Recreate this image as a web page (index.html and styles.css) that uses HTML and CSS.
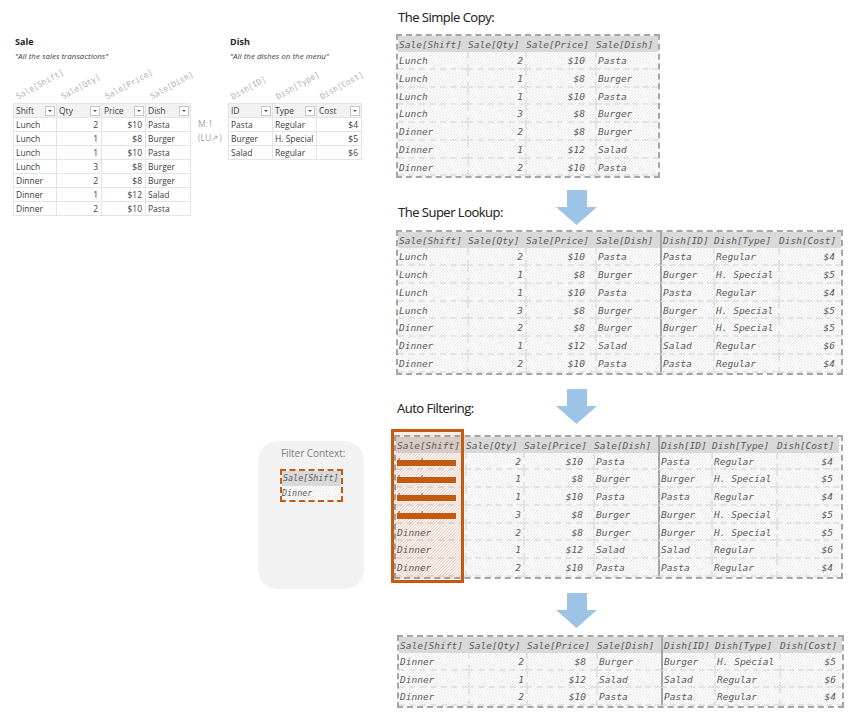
FILE: index.html
```html
<!DOCTYPE html>
<html lang="en">
<head>
<meta charset="utf-8">
<title>Filter context</title>
<link rel="stylesheet" href="styles.css">
</head>
<body>
<div class="page">
  <div class="left">
    <div class="sources">
      <section class="src src-sale">
        <h3>Sale</h3>
        <p class="desc">"All the sales transactions"</p>
        <div class="angled">
          <span>Sale[Shift]</span><span>Sale[Qty]</span><span>Sale[Price]</span><span>Sale[Dish]</span>
        </div>
        <div class="xl xl-sale">
          <div class="xh">Shift<i></i></div><div class="xh">Qty<i></i></div><div class="xh">Price<i></i></div><div class="xh">Dish<i></i></div>
          <div class="xc">Lunch</div><div class="xc n">2</div><div class="xc n">$10</div><div class="xc">Pasta</div>
          <div class="xc">Lunch</div><div class="xc n">1</div><div class="xc n">$8</div><div class="xc">Burger</div>
          <div class="xc">Lunch</div><div class="xc n">1</div><div class="xc n">$10</div><div class="xc">Pasta</div>
          <div class="xc">Lunch</div><div class="xc n">3</div><div class="xc n">$8</div><div class="xc">Burger</div>
          <div class="xc">Dinner</div><div class="xc n">2</div><div class="xc n">$8</div><div class="xc">Burger</div>
          <div class="xc">Dinner</div><div class="xc n">1</div><div class="xc n">$12</div><div class="xc">Salad</div>
          <div class="xc">Dinner</div><div class="xc n">2</div><div class="xc n">$10</div><div class="xc">Pasta</div>
        </div>
      </section>
      <div class="rel"><span>M:1</span><span>(LU↗)</span></div>
      <section class="src src-dish">
        <h3>Dish</h3>
        <p class="desc">"All the dishes on the menu"</p>
        <div class="angled">
          <span>Dish[ID]</span><span>Dish[Type]</span><span>Dish[Cost]</span>
        </div>
        <div class="xl xl-dish">
          <div class="xh">ID<i></i></div><div class="xh">Type<i></i></div><div class="xh">Cost<i></i></div>
          <div class="xc">Pasta</div><div class="xc">Regular</div><div class="xc n">$4</div>
          <div class="xc">Burger</div><div class="xc">H. Special</div><div class="xc n">$5</div>
          <div class="xc">Salad</div><div class="xc">Regular</div><div class="xc n">$6</div>
        </div>
      </section>
    </div>
    <aside class="filter">
      <p class="filter-title">Filter Context:</p>
      <div class="mini">
        <div class="mini-h">Sale[Shift]</div>
        <div class="mini-c">Dinner</div>
      </div>
    </aside>
  </div>

  <div class="right">
    <div class="titlebar tb-first"><h2>The Simple Copy:</h2></div>
    <div class="dt dt-sale">
      <div class="h">Sale[Shift]</div><div class="h">Sale[Qty]</div><div class="h">Sale[Price]</div><div class="h">Sale[Dish]</div>
      <div class="c">Lunch</div><div class="c n">2</div><div class="c n p">$10</div><div class="c">Pasta</div>
      <div class="c">Lunch</div><div class="c n">1</div><div class="c n p">$8</div><div class="c">Burger</div>
      <div class="c">Lunch</div><div class="c n">1</div><div class="c n p">$10</div><div class="c">Pasta</div>
      <div class="c">Lunch</div><div class="c n">3</div><div class="c n p">$8</div><div class="c">Burger</div>
      <div class="c">Dinner</div><div class="c n">2</div><div class="c n p">$8</div><div class="c">Burger</div>
      <div class="c">Dinner</div><div class="c n">1</div><div class="c n p">$12</div><div class="c">Salad</div>
      <div class="c">Dinner</div><div class="c n">2</div><div class="c n p">$10</div><div class="c">Pasta</div>
    </div>

    <div class="titlebar tb-super">
      <h2>The Super Lookup:</h2>
      <svg class="arrow" viewBox="0 0 41 35" width="41" height="35"><path d="M11 0H31V17H41L20.500 35L0 17H11Z"/></svg>
    </div>
    <div class="dt dt-full">
      <div class="h">Sale[Shift]</div><div class="h">Sale[Qty]</div><div class="h">Sale[Price]</div><div class="h">Sale[Dish]</div><div class="h d">Dish[ID]</div><div class="h">Dish[Type]</div><div class="h">Dish[Cost]</div>
      <div class="c">Lunch</div><div class="c n">2</div><div class="c n p">$10</div><div class="c">Pasta</div><div class="c d">Pasta</div><div class="c">Regular</div><div class="c n k">$4</div>
      <div class="c">Lunch</div><div class="c n">1</div><div class="c n p">$8</div><div class="c">Burger</div><div class="c d">Burger</div><div class="c">H. Special</div><div class="c n k">$5</div>
      <div class="c">Lunch</div><div class="c n">1</div><div class="c n p">$10</div><div class="c">Pasta</div><div class="c d">Pasta</div><div class="c">Regular</div><div class="c n k">$4</div>
      <div class="c">Lunch</div><div class="c n">3</div><div class="c n p">$8</div><div class="c">Burger</div><div class="c d">Burger</div><div class="c">H. Special</div><div class="c n k">$5</div>
      <div class="c">Dinner</div><div class="c n">2</div><div class="c n p">$8</div><div class="c">Burger</div><div class="c d">Burger</div><div class="c">H. Special</div><div class="c n k">$5</div>
      <div class="c">Dinner</div><div class="c n">1</div><div class="c n p">$12</div><div class="c">Salad</div><div class="c d">Salad</div><div class="c">Regular</div><div class="c n k">$6</div>
      <div class="c">Dinner</div><div class="c n">2</div><div class="c n p">$10</div><div class="c">Pasta</div><div class="c d">Pasta</div><div class="c">Regular</div><div class="c n k">$4</div>
    </div>

    <div class="titlebar tb-auto">
      <h2>Auto Filtering:</h2>
      <svg class="arrow" viewBox="0 0 41 35" width="41" height="35"><path d="M11 0H31V17H41L20.500 35L0 17H11Z"/></svg>
    </div>
    <div class="dt dt-full dt-auto">
      <div class="h">Sale[Shift]</div><div class="h">Sale[Qty]</div><div class="h">Sale[Price]</div><div class="h">Sale[Dish]</div><div class="h d">Dish[ID]</div><div class="h">Dish[Type]</div><div class="h">Dish[Cost]</div>
      <div class="c struck">Lunch<b></b></div><div class="c n">2</div><div class="c n p">$10</div><div class="c">Pasta</div><div class="c d">Pasta</div><div class="c">Regular</div><div class="c n k">$4</div>
      <div class="c struck">Lunch<b></b></div><div class="c n">1</div><div class="c n p">$8</div><div class="c">Burger</div><div class="c d">Burger</div><div class="c">H. Special</div><div class="c n k">$5</div>
      <div class="c struck">Lunch<b></b></div><div class="c n">1</div><div class="c n p">$10</div><div class="c">Pasta</div><div class="c d">Pasta</div><div class="c">Regular</div><div class="c n k">$4</div>
      <div class="c struck">Lunch<b></b></div><div class="c n">3</div><div class="c n p">$8</div><div class="c">Burger</div><div class="c d">Burger</div><div class="c">H. Special</div><div class="c n k">$5</div>
      <div class="c">Dinner</div><div class="c n">2</div><div class="c n p">$8</div><div class="c">Burger</div><div class="c d">Burger</div><div class="c">H. Special</div><div class="c n k">$5</div>
      <div class="c">Dinner</div><div class="c n">1</div><div class="c n p">$12</div><div class="c">Salad</div><div class="c d">Salad</div><div class="c">Regular</div><div class="c n k">$6</div>
      <div class="c">Dinner</div><div class="c n">2</div><div class="c n p">$10</div><div class="c">Pasta</div><div class="c d">Pasta</div><div class="c">Regular</div><div class="c n k">$4</div>
      <div class="highlight"></div>
    </div>

    <div class="titlebar tb-last">
      <span class="title-spacer"></span>
      <svg class="arrow" viewBox="0 0 41 35" width="41" height="35"><path d="M11 0H31V17H41L20.500 35L0 17H11Z"/></svg>
    </div>
    <div class="dt dt-full dt-last">
      <div class="h">Sale[Shift]</div><div class="h">Sale[Qty]</div><div class="h">Sale[Price]</div><div class="h">Sale[Dish]</div><div class="h d">Dish[ID]</div><div class="h">Dish[Type]</div><div class="h">Dish[Cost]</div>
      <div class="c">Dinner</div><div class="c n">2</div><div class="c n p">$8</div><div class="c">Burger</div><div class="c d">Burger</div><div class="c">H. Special</div><div class="c n k">$5</div>
      <div class="c">Dinner</div><div class="c n">1</div><div class="c n p">$12</div><div class="c">Salad</div><div class="c d">Salad</div><div class="c">Regular</div><div class="c n k">$6</div>
      <div class="c">Dinner</div><div class="c n">2</div><div class="c n p">$10</div><div class="c">Pasta</div><div class="c d">Pasta</div><div class="c">Regular</div><div class="c n k">$4</div>
    </div>
  </div>
</div>
</body>
</html>
```
FILE: styles.css
```css
* { box-sizing: border-box; }
html, body { margin: 0; padding: 0; background: #fff; }
.page {
  display: flex;
  width: 852px;
  height: 717px;
  overflow: hidden;
  font-family: "Open Sans", "Liberation Sans", sans-serif;
}

/* Left column: source tables */
.left { width: 396px; flex: none; }
.sources { display: flex; padding: 36px 0 0 13px; height: 215px; }
.src-sale { width: 178px; flex: none; }
.src-dish { width: 134px; flex: none; }
.rel {
  width: 37px;
  flex: none;
  display: flex;
  flex-direction: column;
  gap: 3px;
  padding: 82px 0 0 7px;
  font-size: 8.500px;
  line-height: 11px;
  color: #a6a6a6;
}
.src h3 {
  margin: 0;
  padding-left: 2px;
  font-size: 9px;
  line-height: 12px;
  font-weight: 700;
  color: #262626;
}
.desc {
  margin: 2px 0 0;
  padding-left: 2px;
  font-size: 8px;
  line-height: 12px;
  font-style: italic;
  color: #404040;
}
.angled { display: flex; height: 41px; align-items: flex-end; }
.angled span {
  width: 44.500px;
  flex: none;
  padding: 0 0 1px 7px;
  font-family: "DejaVu Sans Mono", monospace;
  font-size: 8px;
  line-height: 10px;
  color: #b3b3b3;
  white-space: nowrap;
  transform: rotate(-29deg);
  transform-origin: 7px 100%;
}
.xl { display: grid; grid-auto-rows: 14px; font-size: 8.500px; line-height: 13px; color: #404040; }
.xl-sale { grid-template-columns: 44px 45px 44px 45px; grid-template-rows: 15px; }
.xl-dish { grid-template-columns: 45px 44px 45px; grid-template-rows: 15px; }
.xh {
  position: relative;
  padding-left: 2px;
  background: #f2f2f2;
  border-right: 1px solid #e4e4e4;
  border-top: 1px solid #e4e4e4;
  border-bottom: 1px solid #e4e4e4;
  color: #404040;
  line-height: 14px;
}
.xh:first-child, .xc:nth-child(4n+1) { border-left: 1px solid #e4e4e4; }
.xl-dish .xc:nth-child(4n+1) { border-left: 0; }
.xl-dish .xc:nth-child(3n+1) { border-left: 1px solid #e4e4e4; }
.xh i {
  position: absolute;
  right: 1px;
  top: 2px;
  width: 10px;
  height: 10px;
  background: #fff;
  border: 1px solid #c8c8c8;
}
.xh i::after {
  content: "";
  position: absolute;
  left: 2px;
  top: 3px;
  border: 2px solid transparent;
  border-top: 2px solid #595959;
}
.xc {
  padding: 0 3px 0 2px;
  border-right: 1px solid #e4e4e4;
  border-bottom: 1px solid #e4e4e4;
  white-space: nowrap;
}
.n { text-align: right; }

/* Filter context card */
.filter {
  width: 106px;
  height: 148px;
  margin: 226px 0 0 258px;
  padding: 6px 0 0 22px;
  border-radius: 20px;
  background: #f2f2f2;
}
.filter-title {
  margin: 0 0 0 1px;
  font-size: 10px;
  line-height: 13px;
  letter-spacing: -0.05px;
  color: #808080;
  white-space: nowrap;
}
.mini {
  width: 63px;
  margin-top: 9px;
  border: 2px dashed #c55a11;
  font-family: "DejaVu Sans Mono", monospace;
  font-size: 8.400px;
  font-style: italic;
  color: #595959;
}
.mini-h { height: 15px; padding-left: 1px; line-height: 15px; background: #d9d9d9; white-space: nowrap; }
.mini-c {
  height: 14px;
  padding-left: 0;
  line-height: 15px;
  background-image: linear-gradient(135deg, #fff 25%, #e8e8e8 25%, #e8e8e8 50%, #fff 50%, #fff 75%, #e8e8e8 75%);
  background-size: 3px 3px;
}

/* Right column: result tables */
.right { width: 456px; flex: none; }
.titlebar { display: flex; align-items: flex-start; }
.titlebar h2, .title-spacer {
  width: 160px;
  flex: none;
  margin: 0;
  padding-left: 2px;
  font-size: 13px;
  font-weight: 400;
  line-height: 18px;
  letter-spacing: -0.5px;
  color: #262626;
  -webkit-text-stroke: 0.1px #262626;
  white-space: nowrap;
}
.tb-first { height: 34px; align-items: flex-end; }
.tb-first h2 { margin-bottom: 8px; }
.tb-super { height: 52px; padding-top: 12px; }
.tb-super h2 { margin-top: 13px; }
.tb-auto { height: 60px; padding-top: 14px; }
.tb-auto h2 { margin-top: 10px; padding-left: 1px; }
.tb-last { height: 56px; padding-top: 14px; }
.arrow { flex: none; display: block; }
.arrow path { fill: #9dc3e6; }

.dt {
  position: relative;
  display: grid;
  grid-auto-rows: 17.750px;
  grid-template-rows: 16px;
  border: 2px dashed #a6a6a6;
  font-family: "DejaVu Sans Mono", monospace;
  font-size: 9.500px;
  font-style: italic;
  line-height: 18px;
  color: #595959;
  background-image: linear-gradient(135deg, #fff 25%, #e8e8e8 25%, #e8e8e8 50%, #fff 50%, #fff 75%, #e8e8e8 75%);
  background-size: 3px 3px;
  white-space: nowrap;
}
.dt-sale { width: 264px; grid-template-columns: 69px 58px 70px 63px; }
.dt-full { width: 447px; grid-template-columns: 69px 58px 70px 65px 53px 65px 63px; }
.dt-auto { margin-left: -2px; width: 449px; }
.dt-last { margin-left: 1px; width: 447px; }
.h {
  height: 16px;
  padding-left: 1px;
  line-height: 18px;
  background: #d9d9d9;
}
.c {
  padding: 0 3px 0 1px;
  border-bottom: 2px dashed #e3e3e3;
  border-left: 2px dashed #e3e3e3;
}
.dt-sale .c:nth-child(4n+1) { border-left: 0; }
.dt-full .c:nth-child(7n+1) { border-left: 0; }
.c.d { border-left: 2px solid #a6a6a6; }
.h.d { border-left: 2px solid #a6a6a6; }
.c.n { padding-right: 2px; }
.c.p { padding-right: 10px; }
.c.k { padding-right: 6px; }

.struck { position: relative; }
.struck b {
  position: absolute;
  left: 1px;
  top: 7px;
  width: 59px;
  height: 6px;
  background: #c55a11;
}
.highlight {
  position: absolute;
  left: -5px;
  top: -8px;
  width: 73px;
  height: 154px;
  border: 3px solid #c55a11;
  background: rgba(197, 90, 17, 0.1);
  pointer-events: none;
}
```
